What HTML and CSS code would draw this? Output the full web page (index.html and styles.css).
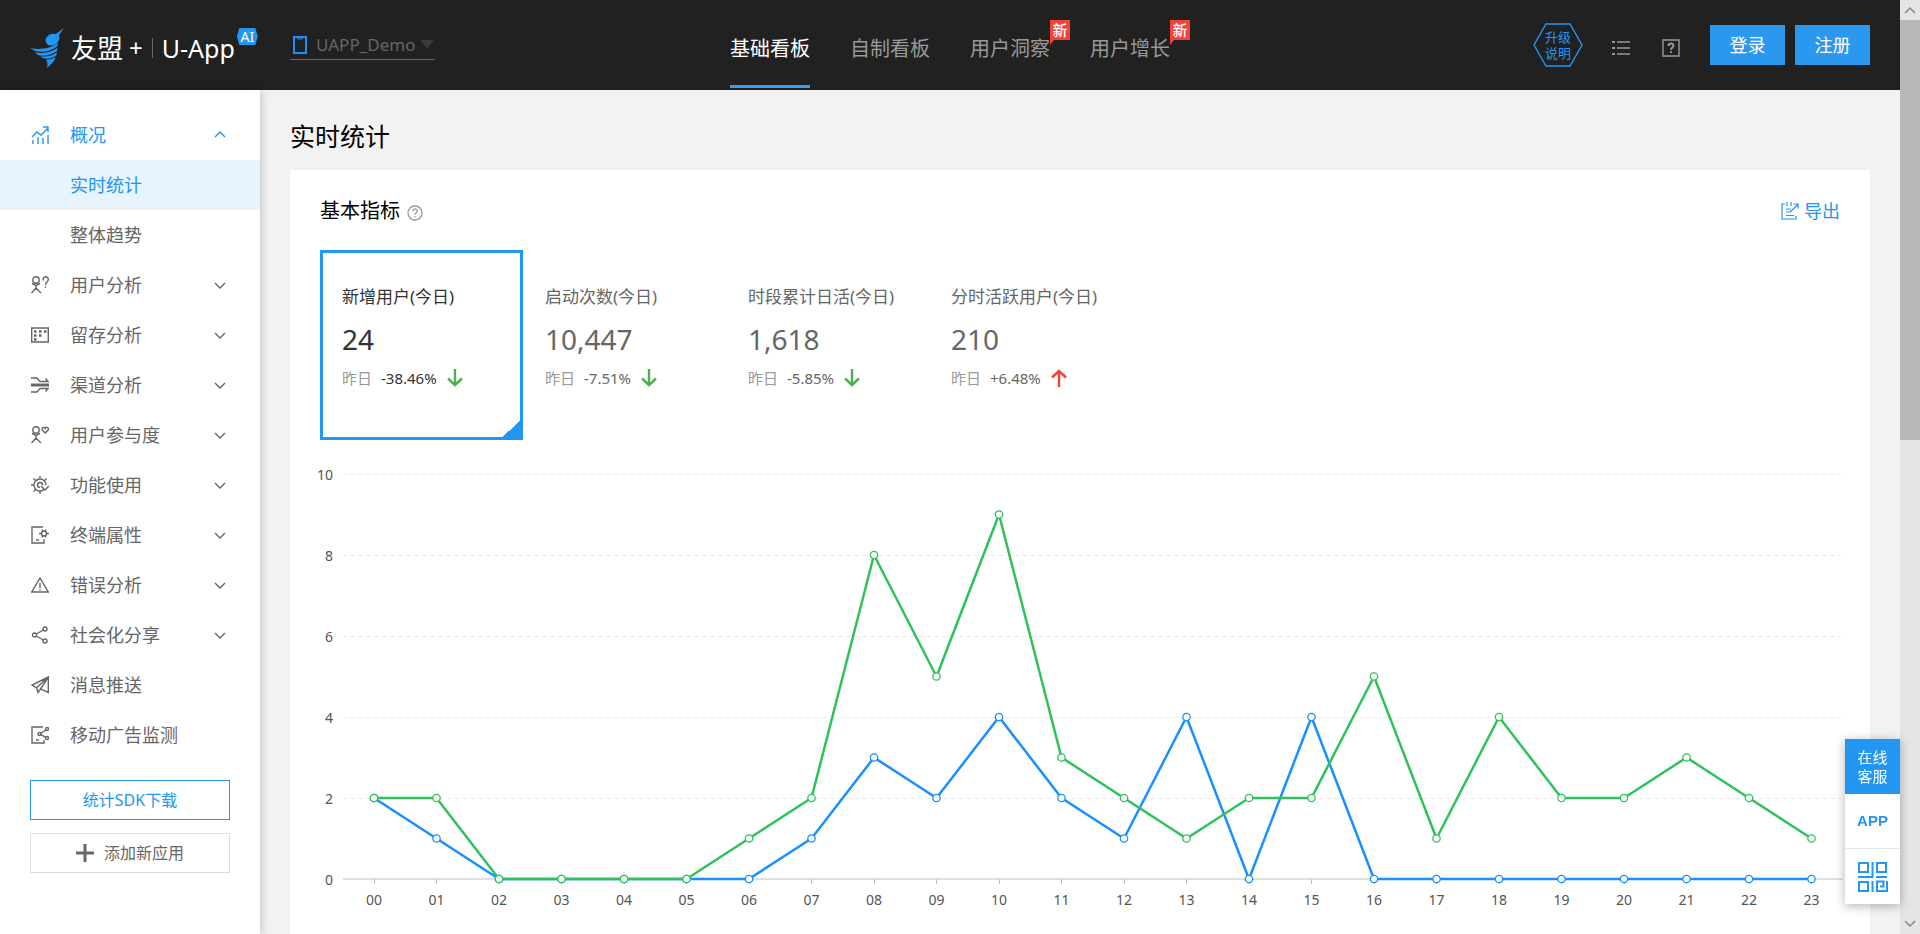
FILE: index.html
```html
<!DOCTYPE html>
<html lang="zh-CN">
<head>
<meta charset="utf-8">
<title>实时统计 - 友盟+ U-App</title>
<link rel="stylesheet" href="styles.css">
</head>
<body>
<div class="app">
  <header class="header">
    <div class="header-left">
      <a class="brand" href="#">
        <svg class="brand-bird" viewBox="0 0 34 40" aria-hidden="true">
          <path d="M34 0 29 7c1 4 0 6-3 9-3 2-7 2-9 0-3-4-1-7 2-9 3-2 5-1 7-1z"/>
          <path d="M0 20c9 2 20 1 28-5l-.5 3C20 24 10 24.500 5 23z"/>
          <path d="M5 24.300c8 1.500 17 .2 22.500-4.800L27 23c-6 4.500-13 5.500-19 4z"/>
          <path d="M10 28.300c7 .8 13-.5 17-4l-.8 3.200c-3.500 3-8 3.500-12.200 3z"/>
          <path d="M16 31.700c4 0 7-.7 9.800-2.700-1 4-4.800 7.500-8.800 11 .8-3.500.7-6-1-8.300z"/>
        </svg>
        <span class="brand-name">友盟</span>
        <span class="brand-plus">+</span>
        <span class="brand-divider"></span>
        <span class="brand-product">U-App</span>
        <span class="brand-ai">AI</span>
      </a>
      <button class="app-picker" type="button">
        <svg class="phone" viewBox="0 0 14 18" aria-hidden="true"><path d="M1 1h12v16H1z"/><path class="notch" d="M5 1h4v2H5z"/></svg>
        <span>UAPP_Demo</span>
        <span class="caret"></span>
      </button>
    </div>
    <nav class="main-nav" aria-label="主导航">
      <a class="is-active" href="#">基础看板</a>
      <a href="#">自制看板</a>
      <a href="#">用户洞察<span class="new-tag">新</span></a>
      <a href="#">用户增长<span class="new-tag">新</span></a>
    </nav>
    <div class="header-right">
      <a class="upgrade" href="#">
        <svg viewBox="0 0 50 44" aria-hidden="true"><path d="M13 1h24l12 21-12 21H13L1 22z"/></svg>
        <span>升级<br>说明</span>
      </a>
      <button class="icon-button" type="button" aria-label="列表">
        <svg viewBox="0 0 18 18" aria-hidden="true"><path d="M5 3h13M5 9h13M5 15h13"/><path class="bold" d="M0 3h3M0 9h3M0 15h3"/></svg>
      </button>
      <button class="icon-button" type="button" aria-label="帮助">
        <svg viewBox="0 0 18 18" aria-hidden="true"><path d="M1 1h16v16H1z"/><path class="bold" d="M6.500 7c0-3.300 5-3.300 5-.4C11.500 8.500 9 8.700 9 10.800M9 12.200v1.800"/></svg>
      </button>
      <div class="auth">
        <button type="button">登录</button>
        <button type="button">注册</button>
      </div>
    </div>
  </header>

  <div class="body">
    <aside class="sidebar">
      <nav class="menu" aria-label="功能菜单">
        <a class="menu-item is-open" href="#">
          <svg viewBox="0 0 18 18" aria-hidden="true"><path d="M1 11 6 6l4 3 7-7M12 1h5v5M2 14v4M7 11v7M12 12v6M17 9v9"/></svg>
          <span>概况</span>
          <svg class="chevron" viewBox="0 0 12 12" aria-hidden="true"><path d="m1 8 5-5 5 5"/></svg>
        </a>
        <a class="menu-item sub is-current" href="#"><span>实时统计</span></a>
        <a class="menu-item sub" href="#"><span>整体趋势</span></a>
        <a class="menu-item" href="#">
          <svg viewBox="0 0 18 18" aria-hidden="true"><circle cx="5" cy="4" r="3.200"/><path d="M1 7.500 5 9.500l4-2M5 9.500V12l-4.500 5M5 12l5 5M12 4.500c0-5 5.300-4.500 5.300-1C17.300 6 14.500 6 14.500 9M14.500 10.300v1.500"/></svg>
          <span>用户分析</span>
          <svg class="chevron" viewBox="0 0 12 12" aria-hidden="true"><path d="m1 4 5 5 5-5"/></svg>
        </a>
        <a class="menu-item" href="#">
          <svg viewBox="0 0 18 18" aria-hidden="true"><path d="M.7 2h16.600v14H.7z"/><path class="dots" d="M3 5.500h2.500M8 5.500h2.500M13 5.500h2.500M3 9.500h2.500M8 9.500h2.500M3 13.500h2.500"/></svg>
          <span>留存分析</span>
          <svg class="chevron" viewBox="0 0 12 12" aria-hidden="true"><path d="m1 4 5 5 5-5"/></svg>
        </a>
        <a class="menu-item" href="#">
          <svg viewBox="0 0 18 18" aria-hidden="true"><path d="M0 2h6l3 3.500h8l-2.500-3M0 16h6l3-3.500h8l-2.500 3"/><path class="thick" d="M0 9h18"/></svg>
          <span>渠道分析</span>
          <svg class="chevron" viewBox="0 0 12 12" aria-hidden="true"><path d="m1 4 5 5 5-5"/></svg>
        </a>
        <a class="menu-item" href="#">
          <svg viewBox="0 0 18 18" aria-hidden="true"><circle cx="5" cy="4" r="3.200"/><path d="M1 7.500 5 9.500l4-2M5 9.500V12l-4.500 5M5 12l5 5M14.200 7 11.300 4c-1-2.500 2-3.600 2.900-1.500C15.200.4 18.200 1.500 17.200 4z"/></svg>
          <span>用户参与度</span>
          <svg class="chevron" viewBox="0 0 12 12" aria-hidden="true"><path d="m1 4 5 5 5-5"/></svg>
        </a>
        <a class="menu-item" href="#">
          <svg viewBox="0 0 18 18" aria-hidden="true"><path d="M13.500 13A6 6 0 1 1 15 9M9 3V0M9 18v-3M3 9H0M4.500 4.500l-2-2M13.500 4.500l2-2M4.500 13.500l-2 2M9 11.500A2.500 2.500 0 1 1 11.500 9M10 10l4 4 4-4"/></svg>
          <span>功能使用</span>
          <svg class="chevron" viewBox="0 0 12 12" aria-hidden="true"><path d="m1 4 5 5 5-5"/></svg>
        </a>
        <a class="menu-item" href="#">
          <svg viewBox="0 0 18 18" aria-hidden="true"><path d="M12 1H1v16h12v-4M5 14h3"/><circle cx="13" cy="7.500" r="2.500"/><path d="M11 3.500l1 1.700M15 3.500l-1 1.700M11 11.500l1-1.700M15 11.500l-1-1.700M8 7.500h2.500M15.500 7.500H18"/></svg>
          <span>终端属性</span>
          <svg class="chevron" viewBox="0 0 12 12" aria-hidden="true"><path d="m1 4 5 5 5-5"/></svg>
        </a>
        <a class="menu-item" href="#">
          <svg viewBox="0 0 18 18" aria-hidden="true"><path d="M9 2 17.300 16H.7zM9 7v5M9 13v1.500"/></svg>
          <span>错误分析</span>
          <svg class="chevron" viewBox="0 0 12 12" aria-hidden="true"><path d="m1 4 5 5 5-5"/></svg>
        </a>
        <a class="menu-item" href="#">
          <svg viewBox="0 0 18 18" aria-hidden="true"><circle cx="3.500" cy="9" r="2"/><circle cx="14" cy="3" r="2"/><circle cx="14" cy="15" r="2"/><path d="M5.200 8 12.300 4M5.200 10l7.100 4"/></svg>
          <span>社会化分享</span>
          <svg class="chevron" viewBox="0 0 12 12" aria-hidden="true"><path d="m1 4 5 5 5-5"/></svg>
        </a>
        <a class="menu-item" href="#">
          <svg viewBox="0 0 18 18" aria-hidden="true"><path d="M17.300 1 1 9l4.500 2.800zM17.300 1v15.500L9.500 13zM5.500 11.800 7 16.500l2.500-3.500"/></svg>
          <span>消息推送</span>
        </a>
        <a class="menu-item" href="#">
          <svg viewBox="0 0 18 18" aria-hidden="true"><path d="M12 1H1v16h12v-3M5 14h3"/><circle cx="8.500" cy="8" r="1.500"/><circle cx="16" cy="3" r="1.500"/><circle cx="16" cy="12" r="1.500"/><path d="M10 7.300 14.700 4M10 8.700l4.700 2.600"/></svg>
          <span>移动广告监测</span>
        </a>
      </nav>
      <div class="sidebar-actions">
        <button class="outline primary" type="button">统计SDK下载</button>
        <button class="outline" type="button">
          <svg viewBox="0 0 18 18" aria-hidden="true"><path d="M9 0v18M0 9h18"/></svg>
          <span>添加新应用</span>
        </button>
      </div>
    </aside>

    <main class="main">
      <h1>实时统计</h1>
      <section class="card">
        <div class="card-head">
          <h2>基本指标</h2>
          <svg class="hint" viewBox="0 0 16 16" role="img" aria-label="说明"><circle cx="8" cy="8" r="7"/><path d="M5.700 6.300c0-3 4.600-3 4.600-.2C10.300 7.800 8 7.800 8 9.800M8 10.900v1.500"/></svg>
          <a class="export" href="#">
            <svg viewBox="0 0 18 18" aria-hidden="true"><path d="M4 2H1v15h14v-3M6 0v4M10 0v4M5 7h5M5 10h5M5 13.500h8M9 10l8-7.500M12.500 2H17v4.500"/></svg>
            <span>导出</span>
          </a>
        </div>

        <div class="metrics">
          <button class="metric is-selected" type="button">
            <span class="metric-name">新增用户(今日)</span>
            <span class="metric-value">24</span>
            <span class="metric-diff"><span class="day">昨日</span><span>-38.46%</span>
              <svg class="down" viewBox="0 0 16 18" aria-hidden="true"><path d="M8 0v16M1 9.500 8 16l7-6.500"/></svg></span>
          </button>
          <button class="metric" type="button">
            <span class="metric-name">启动次数(今日)</span>
            <span class="metric-value">10,447</span>
            <span class="metric-diff"><span class="day">昨日</span><span>-7.51%</span>
              <svg class="down" viewBox="0 0 16 18" aria-hidden="true"><path d="M8 0v16M1 9.500 8 16l7-6.500"/></svg></span>
          </button>
          <button class="metric" type="button">
            <span class="metric-name">时段累计日活(今日)</span>
            <span class="metric-value">1,618</span>
            <span class="metric-diff"><span class="day">昨日</span><span>-5.85%</span>
              <svg class="down" viewBox="0 0 16 18" aria-hidden="true"><path d="M8 0v16M1 9.500 8 16l7-6.500"/></svg></span>
          </button>
          <button class="metric" type="button">
            <span class="metric-name">分时活跃用户(今日)</span>
            <span class="metric-value">210</span>
            <span class="metric-diff"><span class="day">昨日</span><span>+6.48%</span>
              <svg class="up" viewBox="0 0 16 18" aria-hidden="true"><path d="M8 18V2M1 8.500 8 2l7 6.500"/></svg></span>
          </button>
        </div>

        <svg class="chart" viewBox="0 0 1540 460" role="img" aria-label="新增用户分时趋势">
          <defs>
            <marker id="dot-blue" class="dot blue" viewBox="0 0 10 10" refX="5" refY="5" markerWidth="10" markerHeight="10" markerUnits="userSpaceOnUse"><circle cx="5" cy="5" r="3.700"/></marker>
            <marker id="dot-green" class="dot green" viewBox="0 0 10 10" refX="5" refY="5" markerWidth="10" markerHeight="10" markerUnits="userSpaceOnUse"><circle cx="5" cy="5" r="3.700"/></marker>
          </defs>
          <path class="grid" d="M33 14.500H1531M33 95.500H1531M33 176.500H1531M33 257.500H1531M33 338.500H1531"/>
          <path class="axis" d="M33 419H1533M64.500 419v5M126.500 419v5M189.500 419v5M251.500 419v5M314.500 419v5M376.500 419v5M439.500 419v5M501.500 419v5M564.500 419v5M626.500 419v5M689.500 419v5M751.500 419v5M814.500 419v5M876.500 419v5M939.500 419v5M1001.500 419v5M1064.500 419v5M1126.500 419v5M1189.500 419v5M1251.500 419v5M1314.500 419v5M1376.500 419v5M1439.500 419v5M1501.500 419v5"/>
          <g class="y-labels">
            <text x="23" y="20">10</text><text x="23" y="101">8</text><text x="23" y="182">6</text>
            <text x="23" y="263">4</text><text x="23" y="344">2</text><text x="23" y="425">0</text>
          </g>
          <g class="x-labels">
            <text x="64" y="445">00</text><text x="126.500" y="445">01</text><text x="189" y="445">02</text><text x="251.500" y="445">03</text>
            <text x="314" y="445">04</text><text x="376.500" y="445">05</text><text x="439" y="445">06</text><text x="501.500" y="445">07</text>
            <text x="564" y="445">08</text><text x="626.500" y="445">09</text><text x="689" y="445">10</text><text x="751.500" y="445">11</text>
            <text x="814" y="445">12</text><text x="876.500" y="445">13</text><text x="939" y="445">14</text><text x="1001.500" y="445">15</text>
            <text x="1064" y="445">16</text><text x="1126.500" y="445">17</text><text x="1189" y="445">18</text><text x="1251.500" y="445">19</text>
            <text x="1314" y="445">20</text><text x="1376.500" y="445">21</text><text x="1439" y="445">22</text><text x="1501.500" y="445">23</text>
          </g>
          <polyline class="series blue" points="64,338 126.500,378.500 189,419 251.500,419 314,419 376.500,419 439,419 501.500,378.500 564,297.500 626.500,338 689,257 751.500,338 814,378.500 876.500,257 939,419 1001.500,257 1064,419 1126.500,419 1189,419 1251.500,419 1314,419 1376.500,419 1439,419 1501.500,419"/>
          <polyline class="series green" points="64,338 126.500,338 189,419 251.500,419 314,419 376.500,419 439,378.500 501.500,338 564,95 626.500,216.500 689,54.500 751.500,297.500 814,338 876.500,378.500 939,338 1001.500,338 1064,216.500 1126.500,378.500 1189,257 1251.500,338 1314,338 1376.500,297.500 1439,338 1501.500,378.500"/>
        </svg>
      </section>
    </main>
  </div>
</div>

<div class="float-bar">
  <button class="service" type="button">在线<br>客服</button>
  <button class="app-link" type="button">APP</button>
  <button type="button" aria-label="二维码">
    <svg viewBox="0 0 30 30" aria-hidden="true"><path d="M1 1h9v9H1zM19 1h9v9h-9zM1 20h9v9H1zM14.500 0v15H0M18 15h11M14.500 19v11M29 19v10H19V19.500h6.500v5H22"/></svg>
  </button>
</div>

<div class="scrollbar" aria-hidden="true">
  <svg viewBox="0 0 20 20"><path d="m5 13 5-5 5 5"/></svg>
  <span class="scroll-thumb"></span>
  <svg class="scroll-end" viewBox="0 0 20 20"><path d="m5 7 5 5 5-5"/></svg>
</div>
</body>
</html>
```
FILE: styles.css
```css
* {
  box-sizing: border-box;
}

body {
  margin: 0;
  height: 100vh;
  display: flex;
  overflow: hidden;
  background: #f2f2f2;
  color: #666;
  font-family: "Noto Sans", "Noto Sans CJK SC", sans-serif;
  font-size: 18px;
  line-height: 24px;
}

a {
  color: inherit;
  text-decoration: none;
}

button {
  margin: 0;
  padding: 0;
  border: 0;
  background: none;
  color: inherit;
  font: inherit;
  cursor: pointer;
}

svg {
  display: block;
  flex: none;
  fill: none;
  stroke: currentColor;
}

.app {
  flex: 1;
  min-width: 0;
  display: flex;
  flex-direction: column;
}

/* Header */

.header {
  flex: none;
  height: 90px;
  display: grid;
  grid-template-columns: 1fr auto 1fr;
  padding: 0 30px;
  background: #212121;
  color: #999;
}

.header-left,
.header-right {
  display: flex;
  align-items: center;
}

.header-right {
  justify-content: flex-end;
}

.brand {
  flex: none;
  width: 230px;
  display: flex;
  align-items: center;
  padding-top: 6px;
  color: #fff;
  white-space: nowrap;
}

.brand-bird {
  width: 34px;
  height: 40px;
  margin-right: 7px;
  fill: #2196f3;
  stroke: none;
}

.brand-name {
  font-size: 26px;
  line-height: 36px;
}

.brand-product {
  font-size: 25px;
  line-height: 36px;
}

.brand-plus {
  margin-left: 6px;
  font-size: 24px;
}

.brand-divider {
  width: 1px;
  height: 20px;
  margin: 0 9px;
  background: #666;
}

.brand-ai {
  align-self: flex-start;
  width: 21px;
  height: 17px;
  margin-left: 2px;
  background: #2196f3;
  clip-path: polygon(12% 0, 88% 0, 100% 50%, 88% 100%, 12% 100%, 0 50%);
  font-size: 14px;
  line-height: 17px;
  text-align: center;
}

.app-picker {
  display: flex;
  align-items: center;
  gap: 9px;
  height: 30px;
  padding: 0 1px 0 3px;
  margin-left: 30px;
  border-bottom: 1px solid #666;
  color: #666;
  font-size: 17px;
}

.phone {
  width: 14px;
  height: 18px;
  stroke: #1f8cff;
  stroke-width: 2;
}

.phone .notch {
  stroke-width: 1;
}

.caret {
  margin-left: -4px;
  border: 7px solid transparent;
  border-top: 9px solid #3a3a3a;
  border-bottom: 0;
}

.main-nav {
  display: flex;
  gap: 40px;
  font-size: 20px;
}

.main-nav a {
  position: relative;
  height: 88px;
  padding-top: 10px;
  line-height: 78px;
  border-bottom: 3px solid transparent;
}

.main-nav .is-active {
  color: #fff;
  border-bottom-color: #36a0f5;
}

.new-tag {
  position: absolute;
  left: 100%;
  top: 20px;
  width: 20px;
  height: 25px;
  background: #f44336;
  clip-path: polygon(0 0, 100% 0, 100% 80%, 20% 80%, 0 100%);
  color: #fff;
  font-size: 15px;
  font-weight: 500;
  line-height: 20px;
  text-align: center;
}

.upgrade {
  display: grid;
  place-items: center;
  margin-right: 29px;
  color: #2196f3;
  font-size: 13px;
  line-height: 16px;
}

.upgrade > * {
  grid-area: 1 / 1;
}

.upgrade svg {
  width: 50px;
  height: 44px;
  stroke-width: 1.4;
}

.icon-button {
  margin: 6px 32px 0 0;
}

.icon-button:nth-of-type(2) {
  margin-right: 30px;
}

.icon-button svg {
  width: 18px;
  height: 18px;
  stroke-width: 1.4;
}

.icon-button .bold {
  stroke-width: 2;
}

.auth {
  display: flex;
  gap: 10px;
}

.auth button {
  width: 75px;
  height: 40px;
  background: #2b98f0;
  color: #fff;
}

/* Sidebar */

.body {
  flex: 1;
  min-height: 0;
  display: flex;
}

.sidebar {
  flex: none;
  width: 260px;
  padding-top: 20px;
  background: #fff;
  box-shadow: 0 0 10px rgba(0, 0, 0, 0.25);
}

.menu-item {
  display: flex;
  align-items: center;
  gap: 21px;
  height: 50px;
  padding: 0 34px 0 31px;
}

.menu-item.sub {
  padding-left: 70px;
}

.menu-item.is-open,
.menu-item.is-current {
  color: #2196f3;
}

.menu-item.is-current {
  background: #e7f3fd;
}

.menu-item svg {
  width: 18px;
  height: 18px;
  stroke-width: 1.4;
}

.menu-item .dots {
  stroke-width: 2.5;
}

.menu-item .thick {
  stroke-width: 3;
}

.menu-item .chevron {
  width: 12px;
  height: 12px;
  margin-left: auto;
}

.sidebar-actions {
  display: grid;
  gap: 13px;
  padding: 20px 30px;
}

.outline {
  display: flex;
  align-items: center;
  justify-content: center;
  gap: 10px;
  height: 40px;
  border: 1px solid #ddd;
  font-size: 16px;
}

.outline.primary {
  border-color: #2196f3;
  color: #2196f3;
}

.outline svg {
  width: 18px;
  height: 18px;
  stroke-width: 3;
}

/* Main */

.main {
  flex: 1;
  min-width: 0;
  padding: 0 30px;
}

h1 {
  height: 80px;
  margin: 0;
  padding-top: 6px;
  color: #000;
  font-size: 25px;
  font-weight: 400;
  line-height: 80px;
}

.card {
  min-height: 100%;
  padding: 26px 30px;
  background: #fff;
}

.card-head {
  display: flex;
  align-items: center;
  height: 30px;
  color: #000;
}

h2 {
  margin: 0;
  font-size: 20px;
  font-weight: 400;
}

.hint {
  width: 16px;
  height: 16px;
  margin: 4px 0 0 7px;
  color: #999;
  stroke-width: 1.3;
}

.export {
  display: flex;
  align-items: center;
  gap: 5px;
  margin-left: auto;
  color: #2196f3;
}

.export svg {
  width: 18px;
  height: 18px;
  stroke-width: 1.2;
}

.metrics {
  display: flex;
  margin-top: 24px;
}

.metric {
  width: 203px;
  height: 190px;
  display: flex;
  flex-direction: column;
  align-items: flex-start;
  padding: 32px 0 0 19px;
  border: 3px solid transparent;
  text-align: left;
  white-space: nowrap;
}

.metric.is-selected {
  border-color: #2196f3;
  background: linear-gradient(135deg, transparent 50%, #2196f3 50%) right bottom / 17px 17px no-repeat;
  color: #333;
}

.metric-name {
  font-size: 17px;
}

.metric-value {
  margin-top: 12px;
  font-size: 28px;
  line-height: 36px;
}

.metric-diff {
  display: flex;
  align-items: center;
  margin-top: 9px;
  font-size: 15px;
}

.day {
  margin-right: 9px;
  color: #999;
}

.metric-diff svg {
  width: 16px;
  height: 18px;
  margin-left: 10px;
  stroke-width: 2.4;
}

.down {
  color: #4caf50;
}

.up {
  color: #f44336;
}

/* Chart */

.chart {
  width: calc(100% + 20px);
  margin: 20px -10px 0;
}

.grid {
  stroke: #e8e8e8;
  stroke-dasharray: 4 4;
}

.axis {
  stroke: #bfbfbf;
}

.y-labels,
.x-labels {
  fill: #545454;
  stroke: none;
  font-size: 14px;
}

.y-labels {
  text-anchor: end;
}

.x-labels {
  text-anchor: middle;
}

.series {
  stroke-width: 2.5;
  stroke-linejoin: round;
}

.series.blue,
.dot.blue {
  stroke: #1890ff;
}

.series.green,
.dot.green {
  stroke: #2fc25b;
}

.series.blue {
  marker: url(#dot-blue);
}

.series.green {
  marker: url(#dot-green);
}

.dot circle {
  fill: #fff;
  stroke-width: 1.3;
}

/* Floating shortcuts */

.float-bar {
  position: fixed;
  right: 20px;
  bottom: 30px;
  width: 55px;
  background: #fff;
  box-shadow: 0 2px 10px rgba(0, 0, 0, 0.3);
  color: #2196f3;
}

.float-bar button {
  display: flex;
  align-items: center;
  justify-content: center;
  width: 55px;
  height: 55px;
}

.float-bar .service {
  background: #2196f3;
  color: #fff;
  font-size: 15px;
  line-height: 19px;
}

.float-bar .app-link {
  border-bottom: 1px solid #e6e6e6;
  font-family: "Liberation Sans", Arial, sans-serif;
  font-size: 15px;
  font-weight: 700;
}

.float-bar svg {
  width: 30px;
  height: 30px;
  stroke-width: 2;
}

/* Scrollbar */

.scrollbar {
  flex: none;
  width: 20px;
  display: flex;
  flex-direction: column;
  background: #e5e5e5;
  color: #888;
}

.scrollbar svg {
  width: 20px;
  height: 20px;
  stroke-width: 1.5;
}

.scroll-thumb {
  height: 45%;
  background: #b8b8b8;
}

.scrollbar .scroll-end {
  margin-top: auto;
}
```
